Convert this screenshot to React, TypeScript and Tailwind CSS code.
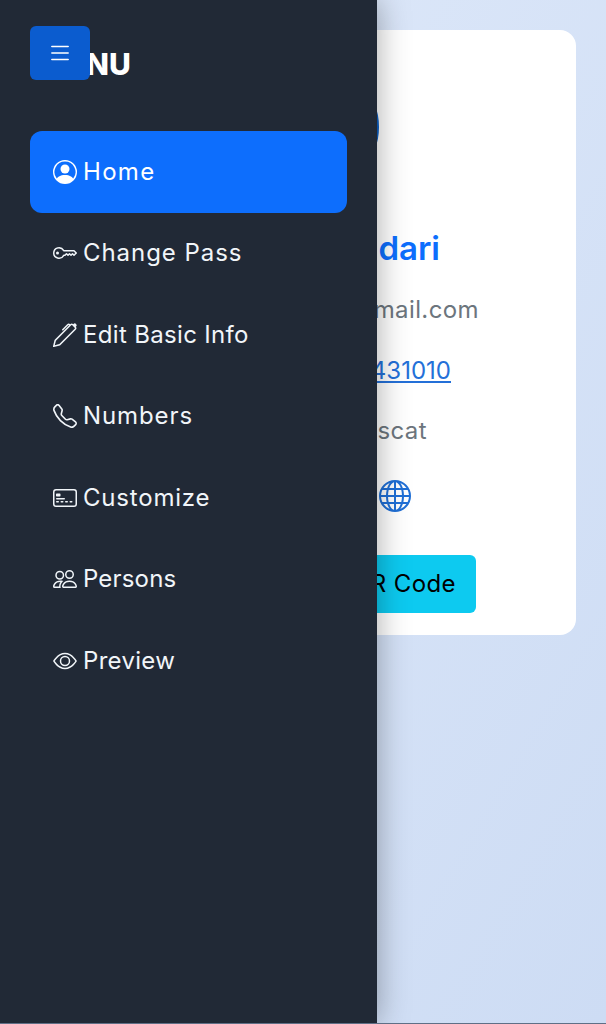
import { BsPersonCircle, BsKey, BsPen, BsTelephone, BsCreditCard2Front, BsPeople, BsEye, BsGlobe, BsList } from "react-icons/bs";

const items = [
  { label: "Home", Icon: BsPersonCircle, active: true, tracking: "tracking-[1.3px]" },
  { label: "Change Pass", Icon: BsKey, tracking: "tracking-[0.95px]" },
  { label: "Edit Basic Info", Icon: BsPen, tracking: "tracking-[0.33px]" },
  { label: "Numbers", Icon: BsTelephone, tracking: "tracking-[0.9px]" },
  { label: "Customize", Icon: BsCreditCard2Front, tracking: "tracking-[0.8px]" },
  { label: "Persons", Icon: BsPeople, tracking: "tracking-[0.17px]" },
  { label: "Preview", Icon: BsEye, tracking: "tracking-[0.3px]" },
];

export default function App() {
  return (
    <div className="relative h-[1024px] w-[606px] overflow-hidden bg-linear-to-br from-[#e0eafa] to-[#cddcf4] font-['Inter',sans-serif]">
      <main className="pt-[30px] pr-[30px] pl-[30px]">
        <section className="flex h-[605px] flex-col items-end rounded-[16px] bg-white pt-[37px]">
          <div className="mr-[197px] h-[120px] w-[120px] rounded-full border-[3px] border-[#0d5fc4]" />
          <h1 className="mt-[39px] mr-[136px] text-[33px] leading-[44px] font-semibold text-[#0d6efd]">Bhandari</h1>
          <p className="mt-[22px] mr-[97px] text-[24px] leading-[36px] tracking-[0.4px] text-[#6c757d]">@gmail.com</p>
          <a href="#" className="mt-[25px] mr-[125px] text-[24px] leading-[36px] text-[#2470d8] underline">431010</a>
          <p className="mt-[24px] mr-[149px] text-[24px] leading-[36px] tracking-[0.4px] text-[#6c757d]">Muscat</p>
          <BsGlobe className="mt-[31px] mr-[165px] h-[32px] w-[32px] text-[#1f6fd6]" />
          <button className="mt-[43px] mr-[100px] flex h-[58px] w-[160px] items-center justify-end rounded-[6px] bg-[#0dcaf0] pr-[20px] text-[24px] tracking-[0.4px] text-black">QR Code</button>
        </section>
      </main>

      <aside className="absolute top-0 bottom-0 left-0 w-[377px] bg-[#212936] px-[30px] shadow-[0_0_30px_rgba(0,0,0,0.34)]">
        <h2 className="pt-[39px] pl-[56px] text-[30px] leading-[50px] font-extrabold text-white">NU</h2>
        <nav className="mt-[42px] flex w-[317px] flex-col">
          {items.map(({ label, Icon, active, tracking }) => (
            <a key={label} href="#" className={`flex h-[81.5px] items-center gap-[6px] rounded-[12px] pl-[23px] text-[24px] ${active ? "bg-[#0d6efd] text-white" : "text-[#f1f5f9]"}`}>
              <Icon className="h-[24px] w-[24px] shrink-0" />
              <span className={tracking}>{label}</span>
            </a>
          ))}
        </nav>
      </aside>

      <button className="absolute top-[26px] left-[30px] flex h-[54px] w-[60px] items-center justify-center rounded-[6px] bg-[#0b5ccf] text-white">
        <BsList className="h-[26px] w-[26px]" />
      </button>
      <div className="absolute right-0 bottom-0 left-0 h-px bg-[#5f6f86]" />
    </div>
  );
}
